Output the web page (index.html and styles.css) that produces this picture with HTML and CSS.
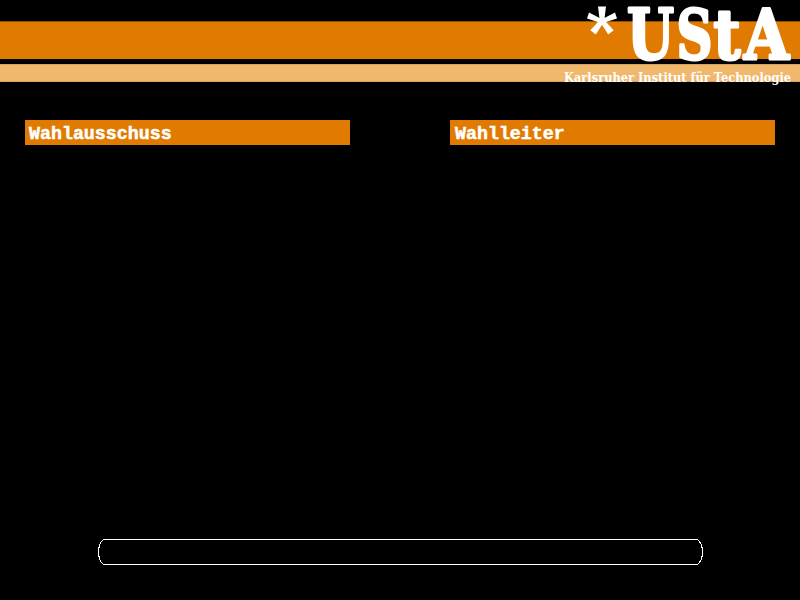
FILE: index.html
```
<!DOCTYPE html>
<html lang="de">
<head>
<meta charset="utf-8">
<title>UStA Wahl</title>
<link rel="stylesheet" href="styles.css">
</head>
<body>
<header class="banner">
  <div class="stripe stripe-dark"></div>
  <div class="stripe stripe-light"></div>
  <svg class="logo" width="250" height="95" viewBox="550 0 250 95" aria-label="*UStA Karlsruher Institut für Technologie">
    <g class="asterisk">
      <path d="M598 6.500h8l-1.800 15h-4.400z"/>
      <path d="M587 18.500l2-6 14.500 7.500-1 3.500z"/>
      <path d="M617 18.500l-2-6-14.500 7.500 1 3.500z"/>
      <path d="M590.300 30.300l5.500 4.300 8-12.500-3.500-2.600z"/>
      <path d="M613.700 30.300l-5.500 4.300-8-12.500 3.500-2.600z"/>
    </g>
    <g class="wordmark">
      <text x="627" y="58.500" textLength="47" lengthAdjust="spacingAndGlyphs">U</text>
      <text x="676.500" y="58.500" textLength="36" lengthAdjust="spacingAndGlyphs">S</text>
      <text x="713.500" y="58.500" textLength="27" lengthAdjust="spacingAndGlyphs">t</text>
      <text x="744" y="58.500" textLength="45" lengthAdjust="spacingAndGlyphs">A</text>
    </g>
    <text class="tagline" x="564" y="81.500" textLength="227" lengthAdjust="spacingAndGlyphs">Karlsruher Institut für Technologie</text>
  </svg>
</header>
<main class="columns">
  <h2 class="heading">Wahlausschuss</h2>
  <h2 class="heading heading-right">Wahlleiter</h2>
</main>
<footer class="status">
  <svg width="606" height="27" viewBox="0 0 606 27"><path class="frame" d="M5.500 .5H599.500C602 2 604.500 7 604.500 13S602 24 599.500 25.500H5.500C3 24 .5 19 .5 13S3 2 5.500 .5Z"/></svg>
</footer>
</body>
</html>
```
FILE: styles.css
```
body {
  margin: 0;
  width: 800px;
  height: 600px;
  overflow: hidden;
  background: #000;
  color: #fff;
  display: flex;
  flex-direction: column;
}
.banner {
  position: relative;
  height: 99px;
  padding-top: 21px;
  flex: none;
}
.stripe { box-sizing: border-box; }
.stripe-dark {
  height: 38px;
  margin-bottom: 5px;
  background: #e17a00;
  border-top: 1px solid #8f4e00;
}
.stripe-light {
  height: 18px;
  background: #efb86c;
  border-top: 1px solid #d3a25f;
  border-bottom: 1px solid #d3a25f;
}
.logo {
  position: absolute;
  right: 0;
  top: 0;
  fill: #fff;
  overflow: visible;
}
.wordmark {
  font: bold 69.500px "DejaVu Serif", serif;
  stroke: #fff;
  stroke-width: 3px;
  stroke-linejoin: round;
}
.tagline { font: bold 13px "DejaVu Serif", serif; }
.columns {
  display: grid;
  grid-template-columns: 325px 325px;
  column-gap: 100px;
  padding: 0 25px;
}
.heading {
  margin: 0;
  height: 25px;
  box-sizing: border-box;
  padding-left: 4px;
  background: #e17a00;
  font: bold 18.3px/28px "Liberation Mono", monospace;
  -webkit-text-stroke: .5px #fff;
}
.heading-right { padding-left: 5px; }
.status {
  margin-top: auto;
  height: 61px;
  padding-left: 98px;
}
.status svg { display: block; }
.frame {
  fill: none;
  stroke: #fff;
  shape-rendering: crispEdges;
}
```
